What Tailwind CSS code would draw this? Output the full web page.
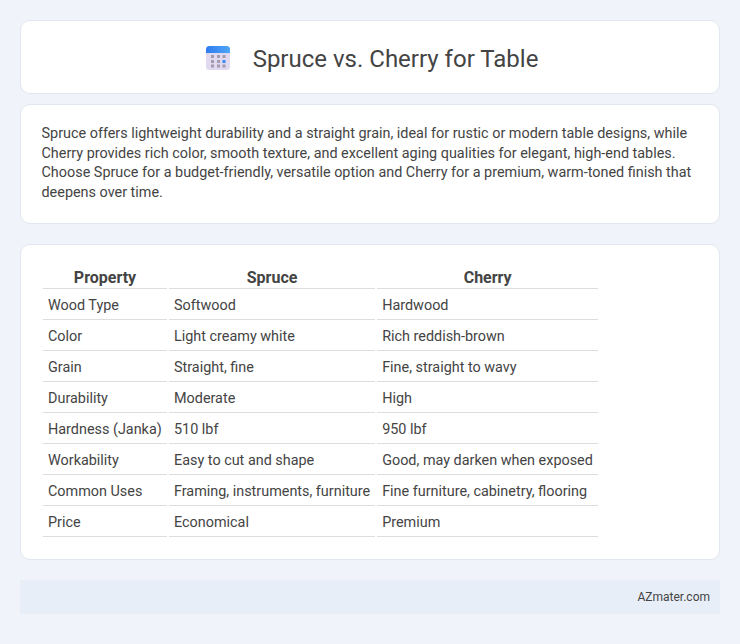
<!DOCTYPE html>
<html lang="en">
<head>
  <meta charset="UTF-8" />
  <title>Spruce vs. Cherry for Table</title>
  <script src="https://cdn.jsdelivr.net/npm/@tailwindcss/browser@4"></script>
</head>
<body class="min-h-screen bg-[#f0f3f9] p-5 font-['Roboto',sans-serif] text-[#444]">
  <header class="h-[74px] pt-[3px] pl-[2px] bg-white border border-[#e2e8f0] rounded-[10px] flex items-center justify-center gap-[21px]">
    <svg class="w-[28px] h-[28px] -mt-[1px]" viewBox="0 0 28 28">
      <defs>
        <linearGradient id="top" x1="0" y1="0" x2="1" y2="0">
          <stop offset="0" stop-color="#2f7bf0"/>
          <stop offset="1" stop-color="#4fa6f5"/>
        </linearGradient>
      </defs>
      <rect x="2" y="2" width="24" height="24" rx="3.500" fill="#e0d9ef"/>
      <path d="M2 9V5.500A3.500 3.500 0 0 1 5.500 2h17A3.500 3.500 0 0 1 26 5.500V9z" fill="url(#top)"/>
      <g fill="#a19dac">
        <rect x="7" y="11" width="3" height="3"/><rect x="13" y="11" width="3" height="3"/><rect x="18.500" y="11" width="3" height="3"/>
        <rect x="7" y="16" width="3" height="3"/><rect x="13" y="16" width="3" height="3"/>
        <rect x="7" y="20.500" width="3" height="3"/><rect x="13" y="20.500" width="3" height="3"/><rect x="18.500" y="20.500" width="3" height="3"/>
      </g>
      <rect x="18.500" y="16" width="3" height="3" fill="#3b8cf0"/>
    </svg>
    <h1 class="text-[24px] font-normal">Spruce vs. Cherry for Table</h1>
  </header>

  <section class="mt-[10px] h-[120px] bg-white border border-[#e2e8f0] rounded-[10px] pl-[20.5px] pr-[19px] py-[19px]">
    <p class="text-[14.4px] leading-[19.6px]">Spruce offers lightweight durability and a straight grain, ideal for rustic or modern table designs, while Cherry provides rich color, smooth texture, and excellent aging qualities for elegant, high-end tables. Choose Spruce for a budget-friendly, versatile option and Cherry for a premium, warm-toned finish that deepens over time.</p>
  </section>

  <section class="mt-[20px] h-[316px] bg-white border border-[#e2e8f0] rounded-[10px] pl-[20px] pr-[18px] pt-[20px]">
    <table class="border-separate border-spacing-[2px] text-[14.4px] whitespace-nowrap">
      <thead>
        <tr class="text-[16px] font-bold">
          <th class="w-[124px] h-[22px] leading-[21px] border-b border-[#ddd]">Property</th>
          <th class="w-[206px] leading-[21px] border-b border-[#ddd]">Spruce</th>
          <th class="w-[221px] leading-[21px] border-b border-[#ddd]">Cherry</th>
        </tr>
      </thead>
      <tbody>
        <tr>
          <td class="h-[29px] px-[5px] pt-[2px] border-b border-[#ddd]">Wood Type</td>
          <td class="px-[5px] pt-[2px] border-b border-[#ddd]">Softwood</td>
          <td class="px-[5px] pt-[2px] border-b border-[#ddd]">Hardwood</td>
        </tr>
        <tr>
          <td class="h-[29px] px-[5px] pt-[2px] border-b border-[#ddd]">Color</td>
          <td class="px-[5px] pt-[2px] border-b border-[#ddd]">Light creamy white</td>
          <td class="px-[5px] pt-[2px] border-b border-[#ddd]">Rich reddish-brown</td>
        </tr>
        <tr>
          <td class="h-[29px] px-[5px] pt-[2px] border-b border-[#ddd]">Grain</td>
          <td class="px-[5px] pt-[2px] border-b border-[#ddd]">Straight, fine</td>
          <td class="px-[5px] pt-[2px] border-b border-[#ddd]">Fine, straight to wavy</td>
        </tr>
        <tr>
          <td class="h-[29px] px-[5px] pt-[2px] border-b border-[#ddd]">Durability</td>
          <td class="px-[5px] pt-[2px] border-b border-[#ddd]">Moderate</td>
          <td class="px-[5px] pt-[2px] border-b border-[#ddd]">High</td>
        </tr>
        <tr>
          <td class="h-[29px] px-[5px] pt-[2px] border-b border-[#ddd]">Hardness (Janka)</td>
          <td class="px-[5px] pt-[2px] border-b border-[#ddd]">510 lbf</td>
          <td class="px-[5px] pt-[2px] border-b border-[#ddd]">950 lbf</td>
        </tr>
        <tr>
          <td class="h-[29px] px-[5px] pt-[2px] border-b border-[#ddd]">Workability</td>
          <td class="px-[5px] pt-[2px] border-b border-[#ddd]">Easy to cut and shape</td>
          <td class="px-[5px] pt-[2px] border-b border-[#ddd]">Good, may darken when exposed</td>
        </tr>
        <tr>
          <td class="h-[29px] px-[5px] pt-[2px] border-b border-[#ddd]">Common Uses</td>
          <td class="px-[5px] pt-[2px] border-b border-[#ddd]">Framing, instruments, furniture</td>
          <td class="px-[5px] pt-[2px] border-b border-[#ddd]">Fine furniture, cabinetry, flooring</td>
        </tr>
        <tr>
          <td class="h-[29px] px-[5px] pt-[2px] border-b border-[#ddd]">Price</td>
          <td class="px-[5px] pt-[2px] border-b border-[#ddd]">Economical</td>
          <td class="px-[5px] pt-[2px] border-b border-[#ddd]">Premium</td>
        </tr>
      </tbody>
    </table>
  </section>

  <footer class="mt-[20px] h-[34px] bg-[#e8eef8] flex items-center justify-end pr-[10px] text-[12px]">AZmater.com</footer>
</body>
</html>
